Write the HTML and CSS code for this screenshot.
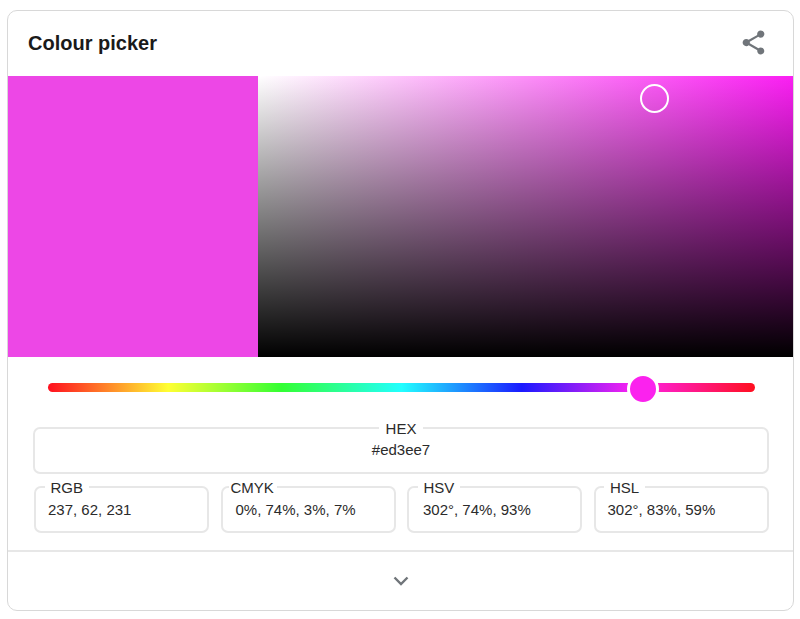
FILE: index.html
```html
<!DOCTYPE html>
<html lang="en">
<head>
	<meta charset="UTF-8">
	<title>Colour picker</title>
	<link rel="stylesheet" href="styles.css">
</head>
<body>
	<div class="card">
		<div class="head">
			<h2 class="title">Colour picker</h2>
			<svg class="share" viewBox="0 0 24 24"><path d="M18 16.08c-.76 0-1.44.3-1.96.77L8.91 12.7c.05-.23.09-.46.09-.7s-.04-.47-.09-.7l7.05-4.11c.54.5 1.25.81 2.04.81 1.66 0 3-1.34 3-3s-1.34-3-3-3-3 1.34-3 3c0 .24.04.47.09.7L8.04 9.81C7.5 9.31 6.79 9 6 9c-1.66 0-3 1.34-3 3s1.34 3 3 3c.79 0 1.5-.31 2.04-.81l7.12 4.16c-.05.21-.08.43-.08.65 0 1.61 1.31 2.92 2.92 2.92 1.61 0 2.92-1.31 2.92-2.92s-1.31-2.92-2.92-2.92z"/></svg>
		</div>
		<div class="picker">
			<div class="swatch"></div>
			<div class="area">
				<span class="marker"></span>
			</div>
		</div>
		<div class="slider">
			<div class="track">
				<span class="thumb"></span>
			</div>
		</div>
		<div class="fields">
			<fieldset class="box box-hex">
				<legend>HEX</legend>
				<div class="val">#ed3ee7</div>
			</fieldset>
			<div class="row">
				<fieldset class="box">
					<legend>RGB</legend>
					<div class="val">237, 62, 231</div>
				</fieldset>
				<fieldset class="box box-cmyk">
					<legend>CMYK</legend>
					<div class="val">0%, 74%, 3%, 7%</div>
				</fieldset>
				<fieldset class="box box-hsv">
					<legend>HSV</legend>
					<div class="val">302°, 74%, 93%</div>
				</fieldset>
				<fieldset class="box">
					<legend>HSL</legend>
					<div class="val">302°, 83%, 59%</div>
				</fieldset>
			</div>
		</div>
		<div class="more">
			<svg class="chev" viewBox="0 0 16 10"><polyline points="1.5,1.5 8,8 14.5,1.5"/></svg>
		</div>
	</div>
</body>
</html>
```

FILE: styles.css
```css
body{
	margin: 0;
	padding: 10px 6px 8px 7px;
	background: #fff;
	font-family: "Liberation Sans", Arial, sans-serif;
	color: #2b2b2b;
}
.card{
	height: 601px;
	box-sizing: border-box;
	border: 1px solid #d8d8d8;
	border-radius: 10px;
	display: flex;
	flex-direction: column;
}
.head{
	height: 65px;
	display: flex;
	align-items: center;
	justify-content: space-between;
	padding: 0 26px 0 20px;
}
.title{
	margin: 0;
	font-size: 20px;
	font-weight: bold;
	color: #1a1a1a;
}
.share{
	width: 29px;
	height: 29px;
	margin-top: -2px;
	margin-right: -1px;
	fill: #70757a;
}
.picker{
	height: 281px;
	display: flex;
}
.swatch{
	width: 250px;
	background: #ed47e6;
}
.area{
	flex: 1;
	position: relative;
	background:
		linear-gradient(to bottom, rgba(0,0,0,0), #000),
		linear-gradient(to right, #fff, #fb1ff3);
}
.marker{
	position: absolute;
	left: 382px;
	top: 8px;
	width: 25px;
	height: 25px;
	border: 2.5px solid #fff;
	border-radius: 50%;
}
.slider{
	padding: 26px 38px 0 40px;
}
.track{
	height: 9px;
	border-radius: 5px;
	position: relative;
	background: linear-gradient(to right, #ff0f1f 0%, #ffff33 17%, #33ff33 33%, #22ffff 50%, #1a1aff 67%, #ff22f0 83%, #ff0f1f 100%);
}
.thumb{
	position: absolute;
	left: 579px;
	top: -10px;
	width: 26px;
	height: 26px;
	background: #fb22ee;
	border: 3px solid #fff;
	border-radius: 50%;
}
.fields{
	padding: 27px 24px 0 25px;
	display: flex;
	flex-direction: column;
	gap: 4px;
}
.row{
	display: grid;
	grid-template-columns: repeat(4, 175px);
	gap: 11.5px;
	margin: 0 0 0 1px;
}
.box{
	margin: 0;
	min-width: 0;
	height: 55px;
	box-sizing: border-box;
	padding: 0 12px;
	border: 2px solid #e7e7e7;
	border-radius: 7px;
	font-size: 15px;
}
.box legend{
	padding: 2px 6px 0;
	margin-left: -3.5px;
	font-size: 15px;
	line-height: 16px;
}
.box-hex{
	text-align: center;
}
.box-hex legend{
	margin: 0 auto;
	padding: 2px 7px 0;
}
.box-cmyk legend{
	margin-left: -6px;
	padding: 2px 3px 0 2px;
}
.box-cmyk .val{
	padding-left: 1px;
}
.box-hsv .val{
	padding-left: 2px;
}
.val{
	line-height: 17px;
	padding-top: 5px;
}
.box-hex .val{
	padding-top: 4px;
}
.more{
	margin-top: 17px;
	border-top: 2px solid #e7e7e7;
	flex: 1;
	display: flex;
	align-items: center;
	justify-content: center;
}
.chev{
	width: 16px;
	height: 10px;
	fill: none;
	stroke: #70757a;
	stroke-width: 2.4;
}
```
